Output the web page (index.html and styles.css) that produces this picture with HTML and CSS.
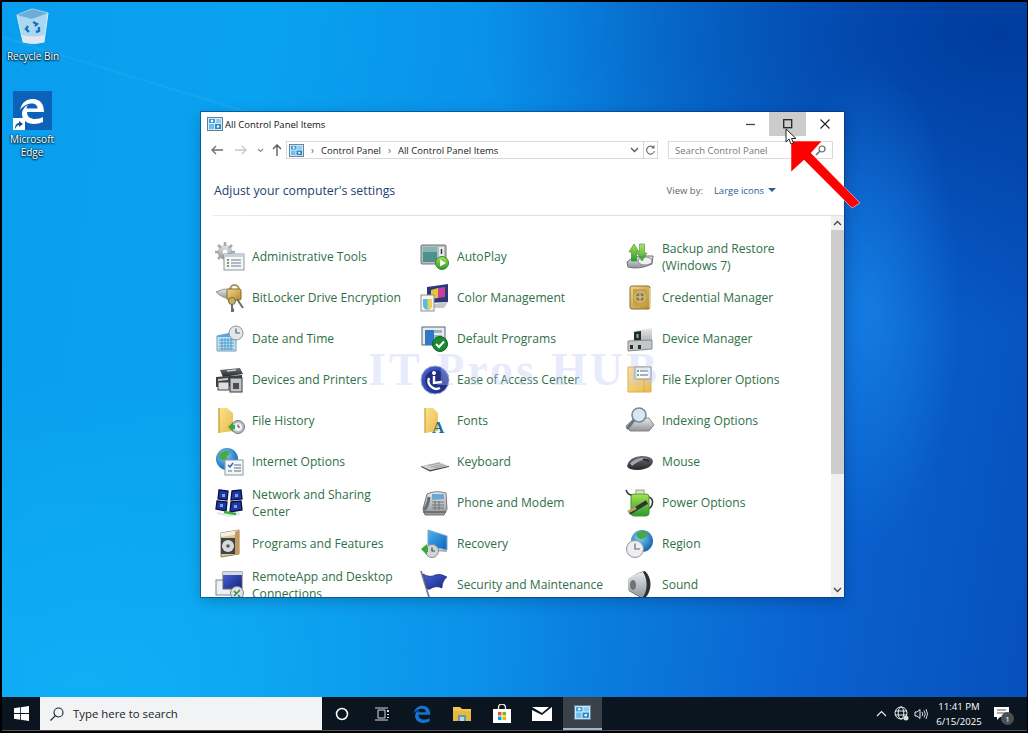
FILE: index.html
```html
<!DOCTYPE html>
<html lang="en">
<head>
    <meta charset="UTF-8">
    <title>All Control Panel Items</title>
    <link rel="stylesheet" href="styles.css">
</head>
<body>

<svg class="defs" width="0" height="0">
    <defs>
        <linearGradient id="gFolder" x1="0" y1="0" x2="1" y2="1"><stop offset="0" stop-color="#fbe38e"/><stop offset="1" stop-color="#e8b94c"/></linearGradient>
        <linearGradient id="gGrey" x1="0" y1="0" x2="0" y2="1"><stop offset="0" stop-color="#e8eaec"/><stop offset="1" stop-color="#8f9499"/></linearGradient>
        <linearGradient id="gDark" x1="0" y1="0" x2="0" y2="1"><stop offset="0" stop-color="#6b6f74"/><stop offset="1" stop-color="#23262a"/></linearGradient>
        <linearGradient id="gGreen" x1="0" y1="0" x2="0" y2="1"><stop offset="0" stop-color="#a6e34f"/><stop offset="1" stop-color="#2d9a2b"/></linearGradient>
        <linearGradient id="gGold" x1="0" y1="0" x2="1" y2="1"><stop offset="0" stop-color="#efd98d"/><stop offset="1" stop-color="#b58a2c"/></linearGradient>
        <linearGradient id="gSky" x1="0" y1="0" x2="1" y2="1"><stop offset="0" stop-color="#4fb4ee"/><stop offset="1" stop-color="#0d62c0"/></linearGradient>
        <linearGradient id="gNavy" x1="0" y1="0" x2="1" y2="1"><stop offset="0" stop-color="#4a67d8"/><stop offset="1" stop-color="#13237f"/></linearGradient>
        <radialGradient id="gGlobe" cx=".4" cy=".35" r=".7"><stop offset="0" stop-color="#7fd0f5"/><stop offset="1" stop-color="#0f5fae"/></radialGradient>
        <symbol id="cpIcon" viewBox="0 0 16 14">
            <rect x=".5" y=".5" width="15" height="13" fill="#d4ecf8" stroke="#5f7f96"/>
            <rect x="2" y="2" width="6" height="4" fill="#3f9bd8"/>
            <rect x="9" y="2" width="5" height="4" fill="#8ecdf0"/>
            <rect x="2" y="7" width="5" height="5" fill="#6cc0ec"/>
            <rect x="8" y="7" width="6" height="5" fill="#2f86c8"/>
            <circle cx="5" cy="4" r="1.2" fill="#fff"/>
            <circle cx="11" cy="9.5" r="1.2" fill="#fff"/>
        </symbol>
    </defs>
</svg>

<div class="screen">
    <div class="desktop">

        <div class="desk-icon recycle">
            <svg width="36" height="37" viewBox="0 0 36 37">
                <path d="M2 7 L17 1 L33 5 L29 34 Q18 37 8 34Z" fill="#a9d9f2" stroke="#d8eef9"/>
                <path d="M2 7 L17 11 L33 5 L17 1Z" fill="#6eaed6"/>
                <path d="M8 34 Q18 37 29 34 L30 27 Q18 30 7 27Z" fill="#dfe8ee"/>
                <path d="M18 14 l4 2 -2 2 M24 19 l0 4 -3 1 M14 24 l-3-3 2-3" fill="none" stroke="#1f6fb5" stroke-width="2.4"/>
            </svg>
            <span>Recycle Bin</span>
        </div>

        <div class="desk-icon edge">
            <div class="edge-tile">
                <svg width="26" height="26" viewBox="0 0 26 26"><path d="M1 12 C3 3 9 1 14 1 C21 1 25 6 25 14 L8 14 C8 19 12 21 16 21 C19 21 22 20 24 19 L24 24 C21 25 18 26 15 26 C8 26 3 22 3 16 C3 12 6 8 9 7 C8 8 7.500 9.500 7.500 10.500 L18.500 10.500 C18.500 7 16 5.500 13 5.500 C8 5.500 4 8 1 12Z" fill="#fff"/></svg>
                <div class="shortcut"><svg width="11" height="11" viewBox="0 0 11 11"><path d="M2 10 C2 6 4 4 6 4 L6 2 L10 5 L6 8 L6 6 C4.500 6 3.500 7.500 2 10Z" fill="#0e4f9e"/></svg></div>
            </div>
            <span>Microsoft<br>Edge</span>
        </div>

        <div class="window">
            <div class="titlebar">
                <svg class="title-icon" width="16" height="14"><use href="#cpIcon"/></svg>
                <span class="title-text">All Control Panel Items</span>
                <div class="win-btns">
                    <div class="win-btn"><svg width="10" height="10" viewBox="0 0 10 10"><path d="M0 5.500H9" stroke="#444" stroke-width="1.300"/></svg></div>
                    <div class="win-btn hover"><svg width="10" height="10" viewBox="0 0 10 10"><rect x=".7" y=".7" width="8" height="8" fill="none" stroke="#222" stroke-width="1.300"/></svg></div>
                    <div class="win-btn"><svg width="10" height="10" viewBox="0 0 10 10"><path d="M.5 .5L9.500 9.500M9.500 .5L.5 9.500" stroke="#222" stroke-width="1.100"/></svg></div>
                </div>
            </div>

            <div class="toolbar">
                <svg class="nav" width="12" height="10" viewBox="0 0 12 10"><path d="M12 5H1M5 1L1 5L5 9" fill="none" stroke="#6d6d6d" stroke-width="1.300"/></svg>
                <svg class="nav faded" width="12" height="10" viewBox="0 0 12 10"><path d="M0 5H11M7 1L11 5L7 9" fill="none" stroke="#c9c9c9" stroke-width="1.300"/></svg>
                <svg class="nav small" width="7" height="5" viewBox="0 0 7 5"><path d="M1 1L3.500 3.500L6 1" fill="none" stroke="#8a8a8a" stroke-width="1.100"/></svg>
                <svg class="nav up" width="10" height="12" viewBox="0 0 10 12"><path d="M5 12V1M1 5L5 1L9 5" fill="none" stroke="#555" stroke-width="1.300"/></svg>
                <div class="address">
                    <svg width="15" height="13"><use href="#cpIcon"/></svg>
                    <span class="crumb-sep">&rsaquo;</span>
                    <span>Control Panel</span>
                    <span class="crumb-sep">&rsaquo;</span>
                    <span>All Control Panel Items</span>
                    <svg class="addr-drop" width="9" height="6" viewBox="0 0 9 6"><path d="M1 1L4.500 4.500L8 1" fill="none" stroke="#555" stroke-width="1.300"/></svg>
                    <div class="refresh"><svg width="11" height="11" viewBox="0 0 11 11"><path d="M8.800 2.700A4 4 0 1 0 9.500 6M9 .5V3H6.500" fill="none" stroke="#666" stroke-width="1.100"/></svg></div>
                </div>
                <div class="search">
                    <span>Search Control Panel</span>
                    <svg width="11" height="11" viewBox="0 0 11 11"><circle cx="7" cy="4" r="3" fill="none" stroke="#666" stroke-width="1.200"/><path d="M4.800 6.200L1 10" stroke="#666" stroke-width="1.500"/></svg>
                </div>
            </div>

            <div class="heading">
                <span class="heading-text">Adjust your computer's settings</span>
                <span class="view-by">View by:</span>
                <span class="view-value">Large icons</span>
                <span class="view-caret"></span>
            </div>
            <div class="divider"></div>

            <div class="body">
                <div class="main">
                    <div class="items">
                        <div class="item">
                            <svg class="ico" viewBox="0 0 30 30"><circle cx="10" cy="10" r="7.500" fill="url(#gGrey)"/><path d="M10 0v4M10 16v4M0 10h4M16 10h4M3 3l3 3M14 14l3 3M17 3l-3 3M3 17l3-3" stroke="#a5a9ad" stroke-width="2.500"/><circle cx="10" cy="10" r="2.500" fill="#fff"/><rect x="9" y="12" width="20" height="16" fill="#f4f6f8" stroke="#8b98a5"/><rect x="9" y="12" width="20" height="3" fill="#c4d2de"/><path d="M12 18h2M12 21h2M12 24h2" stroke="#3c8a3c" stroke-width="1.400"/><path d="M16 18h10M16 21h10M16 24h10" stroke="#6f7f8d"/></svg>
                            <span>Administrative Tools</span>
                        </div>
                        <div class="item">
                            <svg class="ico" viewBox="0 0 30 30"><path d="M1 9 Q8 5 17 6 L17 16 Q8 16 1 9Z" fill="url(#gGrey)" stroke="#999"/><path d="M15 7a4.500 5 0 0 1 9 0" fill="none" stroke="#a39467" stroke-width="2"/><rect x="12" y="6" width="14" height="11" rx="1.500" fill="url(#gGold)" stroke="#8a6a20"/><circle cx="17" cy="18" r="3.500" fill="#c7b06a" stroke="#7c6a30"/><path d="M17 21v7h2M22 16l6 9" stroke="#6f6f5f" stroke-width="2"/></svg>
                            <span>BitLocker Drive Encryption</span>
                        </div>
                        <div class="item">
                            <svg class="ico" viewBox="0 0 30 30"><path d="M2 12L21 8V27H2Z" fill="#bfe3f5" stroke="#7a9cb2"/><path d="M2 12L21 8V13H2Z" fill="#4fa9e0"/><path d="M4 16h15M4 19h15M4 22h15M4 25h15M7 14v12M10 14v12M13 14v12M16 14v12" stroke="#4f9bd0"/><circle cx="21" cy="9" r="7" fill="#e4e7ea" stroke="#8c9196"/><path d="M21 4.500V9H25" fill="none" stroke="#56606a" stroke-width="1.200"/></svg>
                            <span>Date and Time</span>
                        </div>
                        <div class="item">
                            <svg class="ico" viewBox="0 0 30 30"><path d="M5 5L25 3L28 9L8 12Z" fill="url(#gDark)"/><path d="M12 6l9-1" stroke="#cfd3d6" stroke-width="1.500"/><path d="M1 12L27 10V21L1 22Z" fill="#3c4045"/><path d="M3 14l10-1v2l-10 1Z" fill="#c9ccd0"/><rect x="3" y="17" width="11" height="8" fill="#dcdee0" stroke="#444"/><rect x="15" y="13" width="12" height="14" fill="#c2c5c8" stroke="#3a3a3a"/><rect x="18" y="18" width="6" height="6" fill="#4a4d52"/></svg>
                            <span>Devices and Printers</span>
                        </div>
                        <div class="item">
                            <svg class="ico" viewBox="0 0 30 30"><path d="M4 2H12L18 7V25L4 27Z" fill="url(#gFolder)"/><path d="M4 2V27" stroke="#d2a43c" stroke-width="1.500"/><circle cx="23" cy="21" r="6.500" fill="#b9bdc1" stroke="#777"/><circle cx="23" cy="21" r="4" fill="#eef0f2"/><path d="M23 18.500V21H25" fill="none" stroke="#444"/><path d="M13 21L18 16V19H20V23H18V26Z" fill="#3ca63c"/></svg>
                            <span>File History</span>
                        </div>
                        <div class="item">
                            <svg class="ico" viewBox="0 0 30 30"><circle cx="12" cy="12" r="11" fill="url(#gGlobe)"/><path d="M4 8Q9 3 13 4Q16 7 12 9Q13 13 8 13Q4 12 4 8Z M14 15Q18 14 17 20Q14 22 13 19Z" fill="#4ca83f"/><rect x="10" y="13" width="18" height="15" fill="#f3f6f9" stroke="#8b98a5"/><path d="M13 18l2 2 3-4" fill="none" stroke="#2860b8" stroke-width="1.400"/><path d="M19 18h7M19 21h7M19 24h7M13 24h4" stroke="#5c6e80"/></svg>
                            <span>Internet Options</span>
                        </div>
                        <div class="item">
                            <svg class="ico" viewBox="0 0 30 30"><path d="M4 2L13 3L12 12L3 11Z" fill="#1f35a8" stroke="#0a123c" stroke-width="1.300"/><path d="M17 3L26 2L27 11L16 12Z" fill="#1f35a8" stroke="#0a123c" stroke-width="1.300"/><path d="M2 13L12 14L11 23L1 21Z" fill="#1f35a8" stroke="#0a123c" stroke-width="1.300"/><path d="M16 14L26 13L27 22L15 24Z" fill="#1f35a8" stroke="#0a123c" stroke-width="1.300"/><path d="M7 6h3v3h-3ZM20 6h3v3h-3ZM5 16h3v3h-3ZM19 17h3v3h-3Z" fill="#7fa4ec"/><path d="M2 24L14 26L24 24L26 27L14 29L2 26Z" fill="#e4e8ea"/><path d="M9 24L21 26" stroke="#34b034" stroke-width="2.500"/></svg>
                            <span>Network and Sharing<br>Center</span>
                        </div>
                        <div class="item">
                            <svg class="ico" viewBox="0 0 30 30"><path d="M6 4L24 1V25L6 28Z" fill="#e3c68e" stroke="#92785a"/><path d="M6 4L24 1V5L6 8Z" fill="#f0efe8"/><path d="M20 3L24 1V25L20 26Z" fill="#c49a58"/><rect x="6" y="9" width="14" height="16" fill="#3e4347"/><circle cx="13" cy="17" r="6" fill="#d7dadc"/><circle cx="13" cy="17" r="1.800" fill="#55595c"/></svg>
                            <span>Programs and Features</span>
                        </div>
                        <div class="item">
                            <svg class="ico" viewBox="0 0 30 30"><rect x="1" y="10" width="17" height="15" fill="#eef1f4" stroke="#7c8894"/><rect x="8" y="2" width="19" height="17" fill="url(#gNavy)" stroke="#666"/><rect x="8" y="2" width="19" height="3" fill="#d6dbe2"/><circle cx="22" cy="23" r="6.500" fill="#dfe2e4" stroke="#85898d"/><path d="M19 26l6-6M19 21l2 2M23 25l2 2" stroke="#2f8a3f" stroke-width="1.400"/></svg>
                            <span>RemoteApp and Desktop<br>Connections</span>
                        </div>

                        <div class="item">
                            <svg class="ico" viewBox="0 0 30 30"><rect x="1" y="3" width="25" height="19" rx="1" fill="#b9bdc2" stroke="#6f757b"/><rect x="3" y="5" width="14" height="15" fill="#4f8f8c"/><rect x="3" y="5" width="14" height="5" fill="#7fb9b0"/><rect x="19" y="5" width="5" height="15" fill="#e8eaec"/><path d="M21.500 7v5" stroke="#333" stroke-width="1.400"/><circle cx="22" cy="21" r="6.500" fill="url(#gGreen)" stroke="#2f8a2f"/><path d="M20 17.500L26 21L20 24.500Z" fill="#fff"/></svg>
                            <span>AutoPlay</span>
                        </div>
                        <div class="item">
                            <svg class="ico" viewBox="0 0 30 30"><path d="M7 4L28 1V19L7 20Z" fill="#2a3a78"/><path d="M11 7L18 5V15L11 16Z" fill="#e3c53b"/><path d="M18 5L25 4V14L18 15Z" fill="#c83f9c"/><path d="M14 21L28 19L24 25H14Z" fill="#c4c8cc"/><rect x="1" y="12" width="13" height="16" fill="#f4f4f4" stroke="#8f8f8f"/><path d="M3 16H12V22Q12 26 7.500 27Q3 26 3 22Z" fill="#5cb8e0"/><path d="M7.500 16H12V22Q12 26 7.500 27Z" fill="#e9d25a"/></svg>
                            <span>Color Management</span>
                        </div>
                        <div class="item">
                            <svg class="ico" viewBox="0 0 30 30"><rect x="2" y="3" width="23" height="18" fill="#e8ecef" stroke="#5d656d"/><path d="M5 6H14V21H5Z" fill="#2f78c8"/><path d="M14 6H22V9H14ZM14 11H22V14H14Z" fill="#9fb2c2"/><circle cx="20" cy="20" r="7.500" fill="#1b8a33" stroke="#0e5f20"/><path d="M16 20l3 3 5-5.500" fill="none" stroke="#fff" stroke-width="2"/></svg>
                            <span>Default Programs</span>
                        </div>
                        <div class="item">
                            <svg class="ico" viewBox="0 0 30 30"><circle cx="15" cy="15" r="14" fill="url(#gNavy)" stroke="#a0abd2"/><circle cx="15" cy="15" r="10" fill="#22307f"/><circle cx="14" cy="8" r="2" fill="#fff"/><path d="M14 11V18L22 17M9 13A8 8 0 0 0 20 23" fill="none" stroke="#fff" stroke-width="2.400"/></svg>
                            <span>Ease of Access Center</span>
                        </div>
                        <div class="item">
                            <svg class="ico" viewBox="0 0 30 30"><path d="M5 2H13L18 7V25L5 27Z" fill="url(#gFolder)"/><path d="M5 2V27" stroke="#d2a43c" stroke-width="1.300"/><text class="font-a" x="12" y="27">A</text></svg>
                            <span>Fonts</span>
                        </div>
                        <div class="item">
                            <svg class="ico" viewBox="0 0 30 30"><path d="M1 19L19 15L29 19L10 23Z" fill="#cfd2d5"/><path d="M1 19L10 23L29 19V20L10 24.500L1 20Z" fill="#44474b"/><path d="M8 18.500L20 16M11 20L23 17.500M14 21L26 18.500" stroke="#8f9397" stroke-width=".8"/></svg>
                            <span>Keyboard</span>
                        </div>
                        <div class="item">
                            <svg class="ico" viewBox="0 0 30 30"><path d="M3 21L7 6Q15 2 26 5L27 21L24 27H5Z" fill="url(#gGrey)" stroke="#777"/><path d="M9 9Q8 18 4 22" fill="none" stroke="#6a6e72" stroke-width="3"/><path d="M12 6L24 6L24 11L12 12Z" fill="#6aa8cf"/><path d="M12 14h12M12 17h12M12 20h12M15 13v9M19 13v9" stroke="#777" stroke-width="1.100"/><path d="M3 24H26" stroke="#666" stroke-width="1.600"/></svg>
                            <span>Phone and Modem</span>
                        </div>
                        <div class="item">
                            <svg class="ico" viewBox="0 0 30 30"><path d="M8 1L27 7V21L8 17Z" fill="url(#gSky)" stroke="#7ea8c8"/><path d="M14 20L27 21V23L14 22Z" fill="#a8acb0"/><circle cx="12" cy="22" r="6.500" fill="#d1d5d8" stroke="#8a8d90"/><path d="M12 18.500V22H15" fill="none" stroke="#444" stroke-width="1.200"/><path d="M1 20L7 15V18H8V23H7V26Z" fill="#3ca63c"/></svg>
                            <span>Recovery</span>
                        </div>
                        <div class="item">
                            <svg class="ico" viewBox="0 0 30 30"><path d="M1 1L9 27" stroke="#7a7f86" stroke-width="1.800"/><path d="M3 4Q10 8 15 5Q21 3 27 7Q22 11 22 18Q16 15 10 19Q8 20 7 18Z" fill="url(#gNavy)" stroke="#0d1c66" stroke-width=".6"/></svg>
                            <span>Security and Maintenance</span>
                        </div>

                        <div class="item">
                            <svg class="ico" viewBox="0 0 30 30"><path d="M2 20Q8 13 28 14L27 22Q14 28 3 25Z" fill="url(#gGrey)" stroke="#6d6f72"/><ellipse cx="20" cy="19" rx="7" ry="4" fill="#eef0f2" stroke="#8a8d90"/><path d="M9 2L14 10H11.500V19H6.500V10H4Z" fill="url(#gGreen)" stroke="#2a8a2a" stroke-width=".6"/><path d="M17 19L22 11H19.500V2H14.500V11H12Z" fill="url(#gGreen)" stroke="#2a8a2a" stroke-width=".6" opacity=".9"/></svg>
                            <span>Backup and Restore<br>(Windows 7)</span>
                        </div>
                        <div class="item">
                            <svg class="ico" viewBox="0 0 30 30"><rect x="5" y="3" width="20" height="23" rx="2" fill="url(#gGold)" stroke="#8a6f28"/><path d="M25 5V25" stroke="#f0dfa8" stroke-width="1.500"/><rect x="8" y="6" width="14" height="17" fill="#c6a24a"/><circle cx="15" cy="14" r="5" fill="#8d7c4a" stroke="#e8d49a"/><path d="M15 10V18M11 14H19" stroke="#e8d49a"/></svg>
                            <span>Credential Manager</span>
                        </div>
                        <div class="item">
                            <svg class="ico" viewBox="0 0 30 30"><path d="M9 7L27 4V22L9 24Z" fill="url(#gGrey)"/><path d="M9 8L16 7V17L9 18Z" fill="#25282c"/><path d="M11.500 10h2v4h-2Z" fill="#7ac27a"/><path d="M3 17L27 16V25L3 27Z" fill="#c4c7ca" stroke="#8a8a8a"/><rect x="5" y="21" width="3" height="4" fill="#2c2e31"/><rect x="13" y="21" width="3" height="4" fill="#2c2e31"/></svg>
                            <span>Device Manager</span>
                        </div>
                        <div class="item">
                            <svg class="ico" viewBox="0 0 30 30"><path d="M3 2H26V27H3Z" fill="url(#gFolder)" stroke="#dcb04c"/><rect x="10" y="2" width="16" height="12" fill="#fafbfc" stroke="#8a8f95"/><path d="M12 6h2M12 10h2" stroke="#3d8a3d" stroke-width="1.400"/><path d="M15 6h8M15 10h8" stroke="#5a6875"/><path d="M19 14V27" stroke="#d6ab48"/></svg>
                            <span>File Explorer Options</span>
                        </div>
                        <div class="item">
                            <svg class="ico" viewBox="0 0 30 30"><path d="M1 20L10 12H24L29 19L24 25H5Z" fill="url(#gGrey)" stroke="#83878b"/><circle cx="14" cy="9" r="7" fill="#d4e8f5" stroke="#7d8790" stroke-width="1.600"/><path d="M9 14L2 23" stroke="#70757a" stroke-width="3"/></svg>
                            <span>Indexing Options</span>
                        </div>
                        <div class="item">
                            <svg class="ico" viewBox="0 0 30 30"><path d="M2 19Q4 10 16 9Q27 9 28 14Q27 22 13 23Q3 23 2 19Z" fill="url(#gDark)"/><path d="M5 16Q12 10 22 11Q13 14 7 19Z" fill="#a2a6aa"/><path d="M18 12L24 14" stroke="#222" stroke-width="1.500"/></svg>
                            <span>Mouse</span>
                        </div>
                        <div class="item">
                            <svg class="ico" viewBox="0 0 30 30"><path d="M1 2Q3 7 7 7M24 9Q29 11 27 17Q26 20 23 21" fill="none" stroke="#333" stroke-width="1.600"/><rect x="6" y="6" width="18" height="22" rx="3" fill="url(#gGreen)" stroke="#4f8f3a"/><rect x="11" y="2" width="8" height="4" fill="#cfe8b8" stroke="#89a878"/><path d="M4 25L22 14" stroke="#30343a" stroke-width="4"/><path d="M3 24L11 20" stroke="#b8a258" stroke-width="3"/></svg>
                            <span>Power Options</span>
                        </div>
                        <div class="item">
                            <svg class="ico" viewBox="0 0 30 30"><circle cx="17" cy="12" r="11" fill="url(#gGlobe)"/><path d="M11 5Q17 0 22 3Q24 7 19 9Q16 11 13 9Z" fill="#49a83f"/><circle cx="10" cy="20" r="8.500" fill="#eceef0" stroke="#92979c"/><path d="M10 14.500V20H15" fill="none" stroke="#666" stroke-width="1.200"/></svg>
                            <span>Region</span>
                        </div>
                        <div class="item">
                            <svg class="ico" viewBox="0 0 30 30"><path d="M4 9Q12 2 20 1Q27 8 25 19Q23 27 18 29Q11 25 4 21Z" fill="#2d2f32"/><path d="M3 9Q10 3 18 2Q23 10 21 20Q20 25 17 28Q10 24 3 20Z" fill="url(#gGrey)"/><ellipse cx="8" cy="15" rx="3" ry="5" fill="#6f7377"/></svg>
                            <span>Sound</span>
                        </div>
                    </div>
                </div>

                <div class="scrollbar">
                    <svg class="sb-arrow" width="9" height="6" viewBox="0 0 9 6"><path d="M1 5L4.500 1.500L8 5" fill="none" stroke="#444" stroke-width="1.300"/></svg>
                    <div class="sb-track"><div class="sb-thumb"></div></div>
                    <svg class="sb-arrow" width="9" height="6" viewBox="0 0 9 6"><path d="M1 1L4.500 4.500L8 1" fill="none" stroke="#444" stroke-width="1.300"/></svg>
                </div>
            </div>
        </div>

        <div class="watermark">IT Pros HUB</div>

        <svg class="red-arrow" width="80" height="80" viewBox="0 0 80 80">
            <path d="M2 2H33L22 14L71 64L63 69L15 21L2 33Z" fill="#f00" stroke="#fff" stroke-opacity=".5"/>
        </svg>
        <svg class="cursor" width="12" height="17" viewBox="0 0 12 17">
            <path d="M1 1V14L4 11L6 16L8.500 15L6.500 10.500H11Z" fill="#fff" stroke="#222"/>
        </svg>
    </div>

    <div class="taskbar">
        <div class="start">
            <svg width="15" height="15" viewBox="0 0 15 15"><path d="M0 2.200L6.200 1.300V7H0ZM7 1.200L15 0V7H7ZM0 8H6.200V13.700L0 12.800ZM7 8H15V15L7 13.800Z" fill="#fff"/></svg>
        </div>
        <div class="task-search">
            <svg width="14" height="14" viewBox="0 0 14 14"><circle cx="8.500" cy="5.500" r="4.500" fill="none" stroke="#222" stroke-width="1.100"/><path d="M5.200 8.800L.5 13.500" stroke="#222" stroke-width="1.200"/></svg>
            <span>Type here to search</span>
        </div>
        <div class="task-apps">
            <div class="task-app"><svg width="14" height="14" viewBox="0 0 14 14"><circle cx="7" cy="7" r="5.500" fill="none" stroke="#fff" stroke-width="1.500"/></svg></div>
            <div class="task-app"><svg width="15" height="14" viewBox="0 0 15 14"><path d="M3 3H10V11H3ZM0 1H13M0 13H13" fill="none" stroke="#d8d8d8"/><path d="M13 3v2M13 7v1M13 10v1" stroke="#d8d8d8" stroke-width="2"/></svg></div>
            <div class="task-app"><svg width="18" height="18" viewBox="0 0 26 26"><path d="M1 12 C3 3 9 1 14 1 C21 1 25 6 25 14 L8 14 C8 19 12 21 16 21 C19 21 22 20 24 19 L24 24 C21 25 18 26 15 26 C8 26 3 22 3 16 C3 12 6 8 9 7 C8 8 7.500 9.500 7.500 10.500 L18.500 10.500 C18.500 7 16 5.500 13 5.500 C8 5.500 4 8 1 12Z" fill="#1273d1"/></svg></div>
            <div class="task-app"><svg width="18" height="16" viewBox="0 0 18 16"><path d="M0 1H7L9 3H18V15H0Z" fill="#f2c94f"/><path d="M0 5H18V15H0Z" fill="#e6b93c"/><path d="M5 9H13V15H5Z" fill="#5f9bb8"/><path d="M7 11H11V15H7Z" fill="#bcd6e2"/></svg></div>
            <div class="task-app"><svg width="18" height="19" viewBox="0 0 18 19"><path d="M5.500 6V3.500A3.500 3.500 0 0 1 12.500 3.500V6" fill="none" stroke="#eee" stroke-width="1.300"/><rect x="0" y="5" width="18" height="14" fill="#fff"/><rect x="5" y="8" width="3.500" height="3.500" fill="#e8562a"/><rect x="9.500" y="8" width="3.500" height="3.500" fill="#7fb900"/><rect x="5" y="12.500" width="3.500" height="3.500" fill="#00a1e8"/><rect x="9.500" y="12.500" width="3.500" height="3.500" fill="#f5b800"/></svg></div>
            <div class="task-app"><svg width="20" height="14" viewBox="0 0 20 14"><path d="M0 3L10 8L20 0V14H0Z" fill="#fff"/><path d="M0 0H17L10 6Z" fill="#fff"/></svg></div>
            <div class="task-app active"><svg width="19" height="15"><use href="#cpIcon"/></svg></div>
        </div>
        <div class="tray">
            <svg class="tray-up" width="11" height="7" viewBox="0 0 11 7"><path d="M1 6L5.500 1.500L10 6" fill="none" stroke="#eee" stroke-width="1.100"/></svg>
            <svg width="15" height="15" viewBox="0 0 15 15"><circle cx="7" cy="7" r="6" fill="none" stroke="#eee"/><ellipse cx="7" cy="7" rx="2.800" ry="6" fill="none" stroke="#eee"/><path d="M1 5H13M1 9H13" stroke="#eee"/><circle cx="12" cy="12" r="2.500" fill="#d8d8d8"/></svg>
            <svg width="14" height="12" viewBox="0 0 14 12"><path d="M1 4H3L6 1.500V10.500L3 8H1Z" fill="none" stroke="#eee"/><path d="M8 4Q9.500 6 8 8M10 2.500Q12.500 6 10 9.500M12 1Q15 6 12 11" fill="none" stroke="#eee" stroke-width=".9"/></svg>
            <div class="clock">11:41 PM<br>6/15/2025</div>
            <div class="notif">
                <svg width="15" height="14" viewBox="0 0 15 14"><path d="M0 0H15V10H6L3 13V10H0Z" fill="#fff"/><path d="M3 3H12M3 6H12" stroke="#555"/></svg>
                <span class="notif-count">1</span>
            </div>
        </div>
    </div>
</div>

</body>
</html>
```
FILE: styles.css
```css
* { box-sizing: border-box; }
html, body { margin: 0; height: 100%; background: #000; overflow: hidden; }
body { font-family: "Open Sans", "Noto Sans", sans-serif; }
svg { display: block; flex: none; }
.defs { position: absolute; }

.screen { width: 1028px; height: 733px; padding: 2px 1px 2px 2px; display: flex; flex-direction: column; background: #000; }
.desktop {
    position: relative; flex: 1; overflow: hidden;
    background:
        linear-gradient(17deg, rgba(255,255,255,0) 56%, rgba(255,255,255,.06) 56.5%, rgba(255,255,255,0) 57.2%) 0 0 / 300px 200px no-repeat,
        radial-gradient(ellipse 90px 240px at 868px 300px, rgba(30,150,245,.5), rgba(30,150,245,0)),
        radial-gradient(ellipse 520px 300px at 1000px 30px, #003c9e, rgba(0,60,158,0)),
        radial-gradient(ellipse 500px 300px at 80px 680px, rgba(20,185,250,.55), rgba(20,185,250,0)),
        linear-gradient(98deg, #0a9fee 0%, #09a2f0 24%, #0a8ae6 52%, #0a62d0 80%, #0650bc 100%);
}

.desk-icon { position: absolute; width: 62px; display: flex; flex-direction: column; align-items: center; color: #fff; font-size: 10px; line-height: 13px; text-align: center; text-shadow: 0 1px 2px #000, 0 0 2px #000; }
.recycle { left: 0; top: 6px; gap: 5px; }
.edge { left: -1px; top: 89px; gap: 3px; }
.edge-tile { position: relative; width: 39px; height: 39px; background: #0b62b8; display: flex; align-items: center; justify-content: center; }
.shortcut { position: absolute; left: 0; bottom: 0; width: 12px; height: 12px; background: #fff; display: flex; align-items: center; justify-content: center; }

.window { position: absolute; left: 199px; top: 110px; width: 643px; height: 485px; background: #fff; overflow: hidden; display: flex; flex-direction: column; box-shadow: 0 0 0 1px rgba(10,50,110,.55), 0 4px 14px rgba(0,0,0,.22); }
.titlebar { height: 24px; display: flex; align-items: center; padding-left: 6px; flex: none; }
.title-icon { margin-right: 2px; }
.title-text { font-size: 9.5px; color: #111; }
.win-btns { margin-left: auto; display: flex; height: 24px; margin-right: 1px; }
.win-btn { width: 37px; display: flex; align-items: center; justify-content: center; }
.win-btn.hover { background: #cccccc; }

.toolbar { height: 28px; flex: none; display: flex; align-items: center; padding: 0 11px 0 10px; }
.nav { margin-right: 12px; }
.nav.small { margin: 0 8px 0 0; }
.nav.faded { margin-right: 10px; }
.nav.up { margin-right: 4px; }
.address { width: 372px; height: 18px; border: 1px solid #d9d9d9; display: flex; align-items: center; gap: 7px; padding-left: 2px; font-size: 9.5px; color: #222; }
.crumb-sep { color: #666; font-size: 10px; }
.addr-drop { margin-left: auto; }
.refresh { width: 14px; height: 100%; border-left: 1px solid #d9d9d9; display: flex; align-items: center; justify-content: center; margin-left: -3px; }
.search { margin-left: 10px; width: 165px; height: 18px; border: 1px solid #d9d9d9; display: flex; align-items: center; justify-content: space-between; padding: 0 6px; font-size: 9.5px; color: #777; }

.heading { height: 51px; flex: none; display: flex; align-items: center; padding: 1px 0 0 13px; }
.heading-text { font-size: 12.3px; color: #1f3f6e; }
.view-by { margin-left: auto; font-size: 9.5px; color: #5c6670; }
.view-value { margin-left: 11px; font-size: 9.5px; color: #2a6096; }
.view-caret { margin: 0 68px 0 4px; border-top: 4px solid #2a6096; border-left: 4px solid transparent; border-right: 4px solid transparent; }
.divider { height: 1px; flex: none; margin-left: 11px; background: linear-gradient(90deg, #ececec, #e0e0e0 20%, #e0e0e0); }

.body { flex: 1; display: flex; min-height: 0; }
.main { flex: 1; min-width: 0; padding-left: 14px; overflow: hidden; }
.items { margin-top: 20px; display: grid; grid-template-rows: repeat(9, 41px); grid-template-columns: repeat(3, 205px); grid-auto-flow: column; }
.item { display: flex; align-items: center; gap: 7px; font-size: 12.1px; line-height: 17px; color: #2f7048; white-space: nowrap; }
.ico { width: 30px; height: 30px; }
.font-a { font-family: "Liberation Serif", serif; font-weight: bold; font-size: 17px; fill: #1b6e8f; }

.scrollbar { width: 13px; flex: none; background: #f0f0f0; display: flex; flex-direction: column; align-items: center; }
.sb-arrow { margin: 4px 0; }
.sb-track { flex: 1; width: 100%; }
.sb-thumb { height: 244px; background: #cdcdcd; }

.watermark { position: absolute; left: 366px; top: 348px; font-family: "Liberation Serif", serif; font-weight: bold; font-size: 46px; line-height: 40px; letter-spacing: 3px; color: rgba(190,198,248,.34); white-space: nowrap; }
.red-arrow { position: absolute; left: 787px; top: 137px; }
.cursor { position: absolute; left: 783px; top: 126px; }

.taskbar { height: 34px; flex: none; background: #0b1520; display: flex; align-items: stretch; border-bottom: 1px solid #555; color: #fff; }
.start { width: 38px; display: flex; align-items: center; justify-content: center; }
.task-search { width: 282px; background: #f1f3f5; display: flex; align-items: center; gap: 9px; padding-left: 10px; font-size: 11.4px; color: #222; }
.task-apps { display: flex; }
.task-app { width: 40px; display: flex; align-items: center; justify-content: center; }
.task-app.active { background: #3a4148; border-bottom: 2px solid #9db8cc; width: 39px; margin-left: 1px; }
.tray { margin-left: auto; display: flex; align-items: center; gap: 5px; padding-right: 10px; }
.tray-up { margin-right: 2px; }
.clock { width: 52px; text-align: center; font-size: 9.6px; line-height: 15px; }
.notif { position: relative; width: 32px; margin-left: -5px; display: flex; justify-content: center; }
.notif-count { position: absolute; left: 16px; top: 5px; width: 13px; height: 13px; border-radius: 50%; background: #4a4f54; font-size: 8px; line-height: 13px; text-align: center; }
```
